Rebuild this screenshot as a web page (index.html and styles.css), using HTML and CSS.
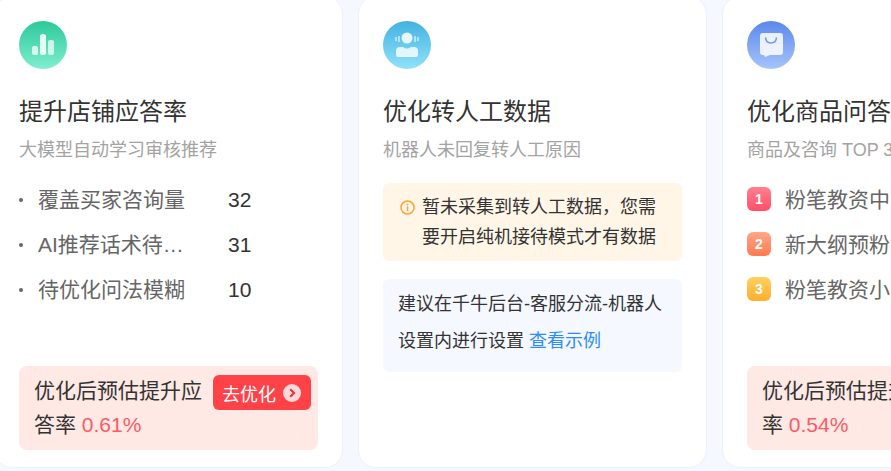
FILE: index.html
```html
<!DOCTYPE html>
<html lang="zh-CN">
<head>
    <meta charset="UTF-8">
    <title>优化建议</title>
    <link rel="stylesheet" href="styles.css">
</head>
<body>
    <div class="cards">
        <div class="card">
            <div class="icon icon-green">
                <svg width="48" height="48" viewBox="0 0 48 48">
                    <rect x="13" y="25" width="6" height="9" rx="2" fill="#fff" opacity="0.75"/>
                    <rect x="21" y="13" width="6" height="21" rx="2.5" fill="#fff" opacity="0.85"/>
                    <rect x="29" y="19" width="6" height="15" rx="2" fill="#fff" opacity="0.7"/>
                </svg>
            </div>
            <h2 class="title">提升店铺应答率</h2>
            <p class="sub">大模型自动学习审核推荐</p>
            <ul class="list">
                <li class="row"><span class="dot"></span><span class="label">覆盖买家咨询量</span><span class="num">32</span></li>
                <li class="row"><span class="dot"></span><span class="label">AI推荐话术待审核确认</span><span class="num">31</span></li>
                <li class="row"><span class="dot"></span><span class="label">待优化问法模糊</span><span class="num">10</span></li>
            </ul>
            <div class="result">
                <button class="go-btn">去优化
                    <svg class="go-arrow" width="18" height="18" viewBox="0 0 18 18">
                        <circle cx="9" cy="9" r="9" fill="#ffd9d9"/>
                        <path d="M7.2 5.2 L11 9 L7.2 12.8" fill="none" stroke="#f02b35" stroke-width="2"/>
                    </svg>
                </button>
                优化后预估提升应答率 <span class="pct">0.61%</span>
            </div>
        </div>

        <div class="card">
            <div class="icon icon-blue">
                <svg width="48" height="48" viewBox="0 0 48 48">
                    <circle cx="24" cy="17" r="5.5" fill="#fff" opacity="0.85"/>
                    <path d="M13 30 Q13 26 17 26 L20 26 Q24 29 28 26 L31 26 Q35 26 35 30 L35 34 Q35 36 33 36 L15 36 Q13 36 13 34 Z" fill="#fff" opacity="0.8"/>
                    <path d="M13 16v4M16 15v6M32 15v6M35 16v4" stroke="#fff" stroke-width="1.5" opacity="0.7"/>
                </svg>
            </div>
            <h2 class="title">优化转人工数据</h2>
            <p class="sub">机器人未回复转人工原因</p>
            <div class="notice">
                <svg class="notice-icon" width="15" height="15" viewBox="0 0 15 15">
                    <circle cx="7.5" cy="7.5" r="6.5" fill="none" stroke="#ffa332" stroke-width="1.5"/>
                    <path d="M7.5 6.5v4.5" stroke="#ffa332" stroke-width="1.5"/>
                    <circle cx="7.5" cy="4.4" r="1" fill="#ffa332"/>
                </svg>
                <span>暂未采集到转人工数据，您需要开启纯机接待模式才有数据</span>
            </div>
            <div class="advice">建议在千牛后台-客服分流-机器人设置内进行设置 <a class="link" href="#">查看示例</a></div>
        </div>

        <div class="card">
            <div class="icon icon-indigo">
                <svg width="48" height="48" viewBox="0 0 48 48">
                    <path d="M16 12 L33 12 Q36 12 36 15 L36 31 Q36 34 33 34 L23 34 L18 36 L17 34 L16 34 Q13 34 13 31 L13 15 Q13 12 16 12 Z" fill="#fff" opacity="0.85"/>
                    <path d="M18.5 16.5 Q19 22 24 22 Q29 22 29.5 16.5" fill="none" stroke="#6f96ee" stroke-width="1.6"/>
                </svg>
            </div>
            <h2 class="title">优化商品问答</h2>
            <p class="sub">商品及咨询 TOP 3</p>
            <ul class="list">
                <li class="row"><span class="rank rank-1">1</span><span class="label label-wide">粉笔教资中学</span></li>
                <li class="row"><span class="rank rank-2">2</span><span class="label label-wide">新大纲预粉笔</span></li>
                <li class="row"><span class="rank rank-3">3</span><span class="label label-wide">粉笔教资小学</span></li>
            </ul>
            <div class="result">
                <button class="go-btn">去查看</button>
                优化后预估提升应答率 <span class="pct">0.54%</span>
            </div>
        </div>
    </div>
</body>
</html>
```

FILE: styles.css
```css
html, body {
    height: 100%;
}
body {
    margin: 0;
    overflow: hidden;
    background: #f6f8ff;
    font-family: "Liberation Sans", "Noto Sans CJK SC", sans-serif;
    color: #333;
}
.cards {
    display: flex;
    gap: 15px;
    margin: -4px 0 0 -6px;
    width: 1100px;
}
.card {
    box-sizing: border-box;
    display: flex;
    flex-direction: column;
    flex: none;
    width: 349px;
    height: 472px;
    padding: 24px 24px 17px;
    background: #fff;
    border: 1px solid #ebefff;
    border-radius: 18px;
}
.icon {
    width: 48px;
    height: 48px;
    border-radius: 50%;
}
.icon svg {
    display: block;
}
.icon-green {
    background: linear-gradient(#2cc999, #80eed0);
}
.icon-blue {
    background: linear-gradient(#43b2e2, #90e2f9);
}
.icon-indigo {
    background: linear-gradient(#5c88ec, #a6c4fb);
}
.title {
    margin: 25px 0 0;
    font-size: 24px;
    line-height: 36px;
    font-weight: 400;
    white-space: nowrap;
}
.sub {
    margin: 7px 0 0;
    font-size: 18px;
    line-height: 26px;
    color: #a3a3a3;
    white-space: nowrap;
}
.list {
    list-style: none;
    margin: 19px 0 0;
    padding: 0;
    display: flex;
    flex-direction: column;
    gap: 13px;
}
.row {
    display: flex;
    align-items: center;
    height: 32px;
    font-size: 21px;
    color: #666;
}
.dot {
    flex: none;
    width: 4px;
    height: 4px;
    margin: 4px 15px 0 0;
    border-radius: 50%;
    background: #666;
}
.label {
    width: 148px;
    overflow: hidden;
    white-space: nowrap;
    text-overflow: ellipsis;
}
.label-wide {
    width: 220px;
}
.num {
    margin: 4px 0 0 42px;
    font-size: 21px;
    color: #333;
}
.rank {
    flex: none;
    width: 24px;
    height: 24px;
    margin: 2px 14px 0 0;
    border-radius: 6px;
    color: #fff;
    font-size: 14px;
    font-weight: 700;
    line-height: 24px;
    text-align: center;
}
.rank-1 {
    background: linear-gradient(#ff808f, #ff4f68);
}
.rank-2 {
    background: linear-gradient(#ffa788, #ff7a50);
}
.rank-3 {
    background: linear-gradient(#ffd060, #ffae2c);
}
.result {
    margin-top: auto;
    padding: 8px 7px 8px 15px;
    background: #ffe9e5;
    border-radius: 8px;
    font-size: 21px;
    line-height: 34px;
    color: #333;
}
.pct {
    color: #ff5a64;
}
.go-btn {
    float: right;
    display: flex;
    align-items: center;
    gap: 7px;
    height: 35px;
    margin: 1px 0 0 11px;
    padding: 0 10px 0 9px;
    background: #ff4248;
    color: #fff;
    border: none;
    border-radius: 6px;
    font-family: inherit;
    font-size: 18px;
}
.notice {
    display: flex;
    gap: 7px;
    margin-top: 20px;
    padding: 9px 20px 9px 17px;
    background: #fff6e7;
    border-radius: 6px;
    font-size: 18px;
    line-height: 30px;
}
.notice-icon {
    flex: none;
    margin-top: 8px;
}
.advice {
    margin-top: 18px;
    padding: 7px 15px 12px;
    background: #f5f8ff;
    border-radius: 6px;
    font-size: 18px;
    line-height: 37px;
}
.link {
    color: #2a8cff;
    text-decoration: none;
}
```
